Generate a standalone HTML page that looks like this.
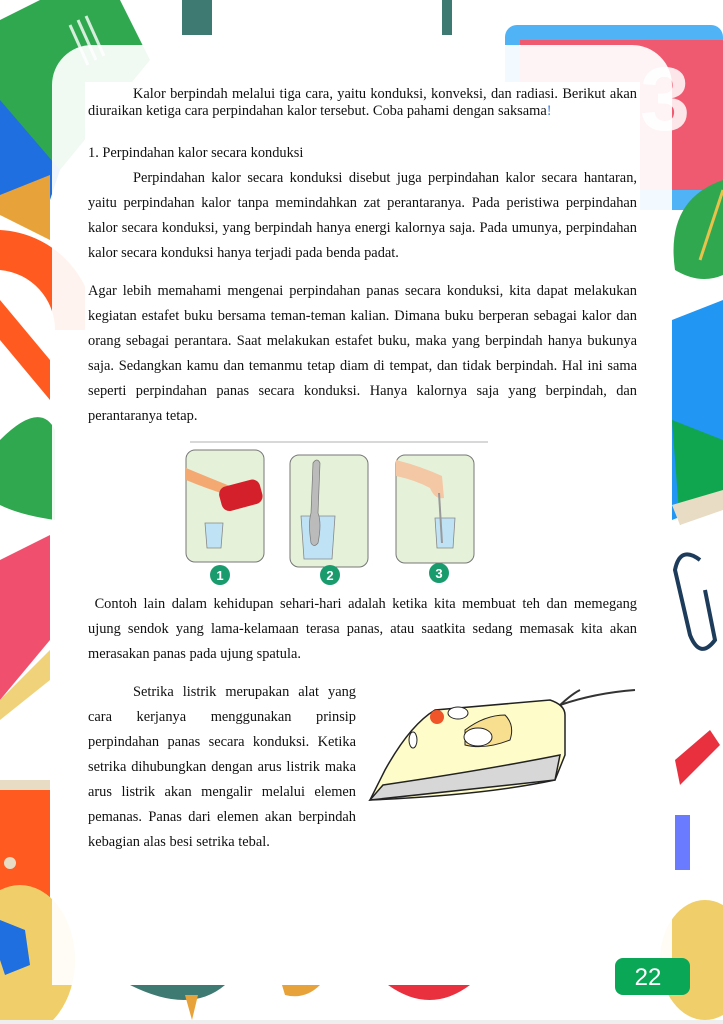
<!DOCTYPE html>
<html><head><meta charset="utf-8"><style>
*{margin:0;padding:0;box-sizing:border-box}
body{width:723px;height:1024px;overflow:hidden;background:#fff;position:relative;font-family:"Liberation Serif",serif;color:#111}
.a{position:absolute}
.t{position:absolute;left:88px;width:549px;font-size:14.4px;text-align:justify}
.t p{margin:0}
.ind{text-indent:45px}
</style></head><body>
<svg class="a" style="left:0;top:0" width="723" height="1024">
<polygon points="0,20 40,0 120,0 150,60 60,170 0,150" fill="#2fa84f"/>
<polygon points="0,100 60,170 50,200 0,215" fill="#1f6fe0"/>
<polygon points="0,195 50,175 50,240 0,215" fill="#e8a23a"/>
<g stroke="#fff" stroke-width="3" opacity=".8"><line x1="70" y1="25" x2="88" y2="65"/><line x1="78" y1="20" x2="96" y2="60"/><line x1="86" y1="16" x2="104" y2="56"/></g>
<rect x="182" y="0" width="30" height="35" fill="#3f7a72"/>
<rect x="442" y="0" width="10" height="35" fill="#3f7a72"/>
<rect x="505" y="25" width="218" height="185" rx="12" fill="#4fb3f5"/>
<rect x="520" y="40" width="203" height="150" fill="#f05a70"/>
<text x="640" y="130" font-family="Liberation Sans" font-size="90" font-weight="bold" fill="#fff" opacity=".85">3</text>
<path d="M723,180 Q665,200 675,270 Q700,285 723,275Z" fill="#2fa84f"/>
<path d="M723,190 L700,260" stroke="#e8c24a" stroke-width="3"/>
<path d="M0,230 A100,100 0 0 1 95,330 L55,330 A60,60 0 0 0 0,270Z" fill="#ff5a1f"/>
<polygon points="0,300 50,360 50,400 0,340" fill="#ff5a1f"/>
<path d="M0,440 Q40,400 55,430 L55,520 Q20,515 0,505Z" fill="#2fa84f"/>
<polygon points="672,320 723,300 723,500 672,520" fill="#2196f3"/>
<polygon points="672,420 723,440 723,500 680,525" fill="#10a650"/>
<polygon points="672,505 723,490 723,510 680,525" fill="#e9dcc5"/>
<polygon points="0,560 50,535 50,640 0,700" fill="#f0506e"/>
<polygon points="0,700 50,650 50,680 0,720" fill="#efd27a"/>
<path d="M700,560 Q680,545 675,570 L690,635 Q700,660 715,640 L705,590" fill="none" stroke="#1d3b5a" stroke-width="4"/>
<polygon points="0,790 50,780 50,950 0,905" fill="#ff5a1f"/>
<rect x="0" y="780" width="50" height="10" fill="#e9dcc5"/>
<circle cx="10" cy="863" r="6" fill="#e9dcc5"/><circle cx="27" cy="897" r="5" fill="#e9dcc5"/>
<polygon points="675,760 710,730 720,745 680,785" fill="#e9303f"/>
<rect x="675" y="815" width="15" height="55" fill="#6b7bff"/>
<ellipse cx="20" cy="960" rx="55" ry="75" fill="#f0cf6a"/>
<polygon points="0,920 25,930 30,965 5,975 0,960" fill="#1f6fe0"/>
<ellipse cx="705" cy="960" rx="45" ry="60" fill="#f0cf6a"/>
<path d="M52,45 h580 a40,40 0 0 1 40,40 v900 h-620 v-900 a40,40 0 0 1 40,-40z" fill="#fff" opacity=".93"/>
<path d="M130,985 L225,985 Q190,1015 130,985Z" fill="#3f7a72"/>
<path d="M388,985 L470,985 Q430,1015 388,985Z" fill="#e9303f"/>
<path d="M282,985 L320,985 Q305,1000 285,995Z" fill="#e8a23a"/>
<path d="M185,995 L192,1020 L198,995Z" fill="#e8a23a"/>
<rect x="85" y="82" width="555" height="790" fill="#fff"/>
<rect x="615" y="958" width="75" height="37" rx="8" fill="#0aa757"/>
<text x="648" y="985" text-anchor="middle" font-family="Liberation Sans" font-size="24" fill="#fff">22</text>
<rect x="0" y="1020" width="723" height="4" fill="#eee"/>
</svg>

<div class="t" style="top:86px;line-height:17px">
<p class="ind">Kalor berpindah melalui tiga cara, yaitu konduksi, konveksi, dan radiasi. Berikut akan diuraikan ketiga cara perpindahan kalor tersebut. Coba pahami dengan saksama<span style="color:#3a7be0">!</span></p>
</div>
<div class="t" style="top:143px;line-height:20px">1. Perpindahan kalor secara konduksi</div>
<div class="t" style="top:166px;line-height:25px">
<p class="ind">Perpindahan kalor secara konduksi disebut juga perpindahan kalor secara hantaran, yaitu perpindahan kalor tanpa memindahkan zat perantaranya. Pada peristiwa perpindahan kalor secara konduksi, yang berpindah hanya energi kalornya saja. Pada umunya, perpindahan kalor secara konduksi hanya terjadi pada benda padat.</p>
</div>
<div class="t" style="top:279px;line-height:25px">
<p>Agar lebih memahami mengenai perpindahan panas secara konduksi, kita dapat melakukan kegiatan estafet buku bersama teman-teman kalian. Dimana buku berperan sebagai kalor dan orang sebagai perantara. Saat melakukan estafet buku, maka yang berpindah hanya bukunya saja. Sedangkan kamu dan temanmu tetap diam di tempat, dan tidak berpindah. Hal ini sama seperti perpindahan panas secara konduksi. Hanya kalornya saja yang berpindah, dan perantaranya tetap.</p>
</div>

<svg class="a" style="left:180px;top:438px" width="320" height="150">
<line x1="10" y1="4" x2="308" y2="4" stroke="#ccc" stroke-width="1.5"/>
<g stroke="#777" stroke-width="1" fill="#e5f2d9">
<rect x="6" y="12" width="78" height="112" rx="9"/>
<rect x="110" y="17" width="78" height="112" rx="9"/>
<rect x="216" y="17" width="78" height="108" rx="9"/>
</g>
<path d="M6,30 Q30,40 50,48 L50,58 Q25,50 6,42Z" fill="#f4a973"/>
<rect x="40" y="45" width="42" height="25" rx="8" fill="#d4202a" transform="rotate(-15 60 58)"/>
<g fill="#bfe3f5" stroke="#888" stroke-width=".8">
<path d="M25,85 h18 l-2,25 h-14z"/>
<path d="M121,78 h34 l-3,43 h-28z"/>
<path d="M255,80 h20 l-2,30 h-16z"/>
</g>
<path d="M133,25 q4,-6 7,0 l-2,50 q4,10 0,30 q-4,5 -7,0 q-3,-20 0,-30z" fill="#bbb" stroke="#777" stroke-width=".7"/>
<path d="M216,22 Q240,28 262,38 L264,60 Q255,62 250,50 Q235,42 216,38Z" fill="#f4c7a5"/>
<line x1="259" y1="55" x2="262" y2="105" stroke="#999" stroke-width="2"/>
<g fill="#1a9b6e"><circle cx="40" cy="137" r="10"/><circle cx="150" cy="137" r="10"/><circle cx="259" cy="135" r="10"/></g>
<g fill="#fff" font-family="Liberation Sans" font-size="13" font-weight="bold" text-anchor="middle"><text x="40" y="142">1</text><text x="150" y="142">2</text><text x="259" y="140">3</text></g>
</svg>

<div class="t" style="top:592px;line-height:25px">
<p>&nbsp;Contoh lain dalam kehidupan sehari-hari adalah ketika kita membuat teh dan memegang ujung sendok yang lama-kelamaan terasa panas, atau saatkita sedang memasak kita akan merasakan panas pada ujung spatula.</p>
</div>
<div class="t" style="top:680px;line-height:25px;width:268px">
<p class="ind">Setrika listrik merupakan alat yang cara kerjanya menggunakan prinsip perpindahan panas secara konduksi. Ketika setrika dihubungkan dengan arus listrik maka arus listrik akan mengalir melalui elemen pemanas. Panas dari elemen akan berpindah kebagian alas besi setrika tebal.</p>
</div>

<svg class="a" style="left:365px;top:685px" width="275" height="140">
<path d="M195,20 Q230,8 270,5" fill="none" stroke="#333" stroke-width="2"/>
<path d="M190,25 Q205,10 215,5" fill="none" stroke="#333" stroke-width="2"/>
<path d="M5,115 L20,85 Q45,40 70,25 L185,15 Q200,20 200,30 L200,70 L190,95 Q120,110 5,115Z" fill="#fefcc8" stroke="#222" stroke-width="1.5"/>
<path d="M5,115 L190,95 L195,70 Q120,85 18,100Z" fill="#d7d7d7" stroke="#222" stroke-width="1.5"/>
<path d="M100,45 Q120,30 140,30 Q150,40 145,55 Q120,65 100,60Z" fill="#f8df90" stroke="#222" stroke-width="1"/>
<ellipse cx="113" cy="52" rx="14" ry="9" fill="#fff" stroke="#222"/>
<circle cx="72" cy="32" r="7" fill="#f0552a"/>
<ellipse cx="93" cy="28" rx="10" ry="6" fill="#fff" stroke="#222"/>
<ellipse cx="48" cy="55" rx="4" ry="8" fill="#fff" stroke="#222"/>
</svg>
</body></html>
